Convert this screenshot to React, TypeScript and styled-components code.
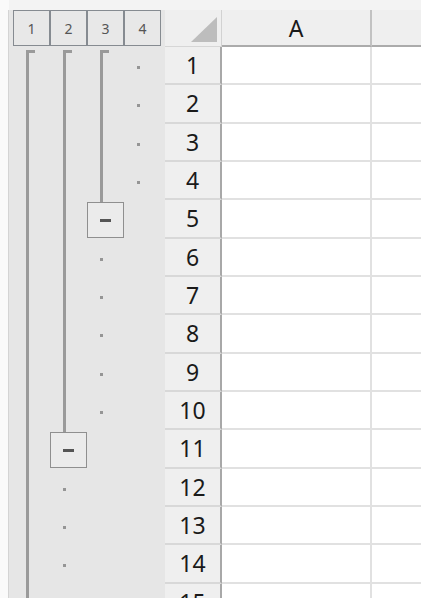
import React from 'react';
import styled, { createGlobalStyle } from 'styled-components';

const GlobalStyle = createGlobalStyle`
  html, body {
    margin: 0;
    padding: 0;
    background: #ffffff;
  }
  body {
    font-family: "Noto Sans", "Liberation Sans", sans-serif;
  }
`;

type Mark = 'top' | 'line' | 'dot' | 'box' | 'none';

const OUTLINE: Mark[][] = [
  ['top', 'top', 'top', 'dot'],
  ['line', 'line', 'line', 'dot'],
  ['line', 'line', 'line', 'dot'],
  ['line', 'line', 'line', 'dot'],
  ['line', 'line', 'box', 'none'],
  ['line', 'line', 'dot', 'none'],
  ['line', 'line', 'dot', 'none'],
  ['line', 'line', 'dot', 'none'],
  ['line', 'line', 'dot', 'none'],
  ['line', 'line', 'dot', 'none'],
  ['line', 'box', 'none', 'none'],
  ['line', 'dot', 'none', 'none'],
  ['line', 'dot', 'none', 'none'],
  ['line', 'dot', 'none', 'none'],
  ['line', 'dot', 'none', 'none'],
];

const Sheet = styled.div`
  width: 421px;
  height: 598px;
  overflow: hidden;
  display: flex;
  flex-direction: column;
  background: #ffffff;
`;

const TopStrip = styled.div`
  display: flex;
  flex: none;
  height: 10px;
  background: #f3f3f3;
`;

const Edge = styled.div<{ $plain?: boolean }>`
  flex: none;
  width: 9px;
  box-sizing: border-box;
  background: #fafafa;
  border-right: 1px solid ${(p) => (p.$plain ? '#fafafa' : '#d4d4d4')};
`;

const HeaderRow = styled.div`
  display: flex;
  flex: none;
  height: 37px;
`;

const LevelBar = styled.div`
  flex: none;
  width: 156px;
  box-sizing: border-box;
  padding-left: 4px;
  display: flex;
  align-items: flex-start;
  background: #e6e6e6;
`;

const LevelButton = styled.div`
  width: 37px;
  height: 36px;
  box-sizing: border-box;
  border: 1px solid #868b91;
  background: #e8e8e8;
  color: #555555;
  font-size: 14px;
  display: flex;
  align-items: center;
  justify-content: center;
`;

const Corner = styled.div`
  flex: none;
  width: 57px;
  box-sizing: border-box;
  background: #efefef;
  border-right: 1px solid #d2d2d2;
  border-bottom: 1px solid #d6d6d6;
  display: flex;
  align-items: flex-end;
  justify-content: flex-end;
  padding: 0 4px 4px 0;
`;

const ColHeader = styled.div<{ $fill?: boolean }>`
  flex: ${(p) => (p.$fill ? '1' : 'none')};
  width: ${(p) => (p.$fill ? 'auto' : '150px')};
  box-sizing: border-box;
  background: #efefef;
  border-bottom: 2px solid #ababab;
  border-right: ${(p) => (p.$fill ? 'none' : '2px solid #c2c2c2')};
  color: #1a1a1a;
  font-size: 23px;
  display: flex;
  align-items: center;
  justify-content: center;
`;

const Row = styled.div`
  display: flex;
  flex: none;
  height: 38.33px;
`;

const OutlineRow = styled.div`
  flex: none;
  width: 156px;
  box-sizing: border-box;
  padding-left: 4px;
  display: flex;
  background: #e6e6e6;
`;

const LevelCell = styled.div<{ $center?: boolean }>`
  flex: none;
  width: 37px;
  height: 100%;
  display: flex;
  flex-direction: column;
  justify-content: ${(p) => (p.$center ? 'center' : 'flex-start')};
`;

const Line = styled.div`
  margin-left: 13px;
  width: 3px;
  flex: 1;
  background: #9a9a9a;
`;

const Bracket = styled.div`
  margin: 3px 0 0 13px;
  width: 9px;
  flex: 1;
  box-sizing: border-box;
  border-left: 3px solid #9a9a9a;
  border-top: 3px solid #9a9a9a;
`;

const Stub = styled.div`
  margin-left: 13px;
  width: 3px;
  height: 1.5px;
  flex: none;
  background: #9a9a9a;
`;

const Dot = styled.div`
  margin: 3px 0 0 13px;
  width: 3px;
  height: 3px;
  background: #959595;
`;

const CollapseBox = styled.div`
  width: 37px;
  height: 36.6px;
  flex: none;
  box-sizing: border-box;
  border: 1.5px solid #8f8f8f;
  background: #ebebeb;
  display: flex;
  align-items: center;
  justify-content: center;
`;

const Minus = styled.div`
  width: 11px;
  height: 3px;
  background: #555555;
`;

const RowHeader = styled.div`
  flex: none;
  width: 57px;
  box-sizing: border-box;
  background: #efefef;
  border-right: 2px solid #a8a8a8;
  border-bottom: 2px solid #d8d8d8;
  color: #1a1a1a;
  font-size: 23px;
  display: flex;
  align-items: center;
  justify-content: center;
`;

const Cell = styled.div<{ $fill?: boolean }>`
  flex: ${(p) => (p.$fill ? '1' : 'none')};
  width: ${(p) => (p.$fill ? 'auto' : '150px')};
  box-sizing: border-box;
  background: #ffffff;
  border-bottom: 2px solid #e1e1e1;
  border-right: ${(p) => (p.$fill ? 'none' : '2px solid #e1e1e1')};
`;

function OutlineMark({ mark }: { mark: Mark }) {
  if (mark === 'top') {
    return (
      <LevelCell>
        <Bracket />
      </LevelCell>
    );
  }
  if (mark === 'line') {
    return (
      <LevelCell>
        <Line />
      </LevelCell>
    );
  }
  if (mark === 'dot') {
    return (
      <LevelCell $center>
        <Dot />
      </LevelCell>
    );
  }
  if (mark === 'box') {
    return (
      <LevelCell>
        <Stub />
        <CollapseBox>
          <Minus />
        </CollapseBox>
      </LevelCell>
    );
  }
  return <LevelCell />;
}

export default function App() {
  return (
    <>
      <GlobalStyle />
      <Sheet>
        <TopStrip>
          <Edge $plain />
        </TopStrip>
        <HeaderRow>
          <Edge />
          <LevelBar>
            {[1, 2, 3, 4].map((n) => (
              <LevelButton key={n}>{n}</LevelButton>
            ))}
          </LevelBar>
          <Corner>
            <svg width="26" height="25" viewBox="0 0 26 25">
              <polygon points="0,25 26,0 26,25" fill="#bdbdbd" />
            </svg>
          </Corner>
          <ColHeader>A</ColHeader>
          <ColHeader $fill />
        </HeaderRow>
        {OUTLINE.map((marks, i) => (
          <Row key={i}>
            <Edge />
            <OutlineRow>
              {marks.map((m, j) => (
                <OutlineMark key={j} mark={m} />
              ))}
            </OutlineRow>
            <RowHeader>{i + 1}</RowHeader>
            <Cell />
            <Cell $fill />
          </Row>
        ))}
      </Sheet>
    </>
  );
}
